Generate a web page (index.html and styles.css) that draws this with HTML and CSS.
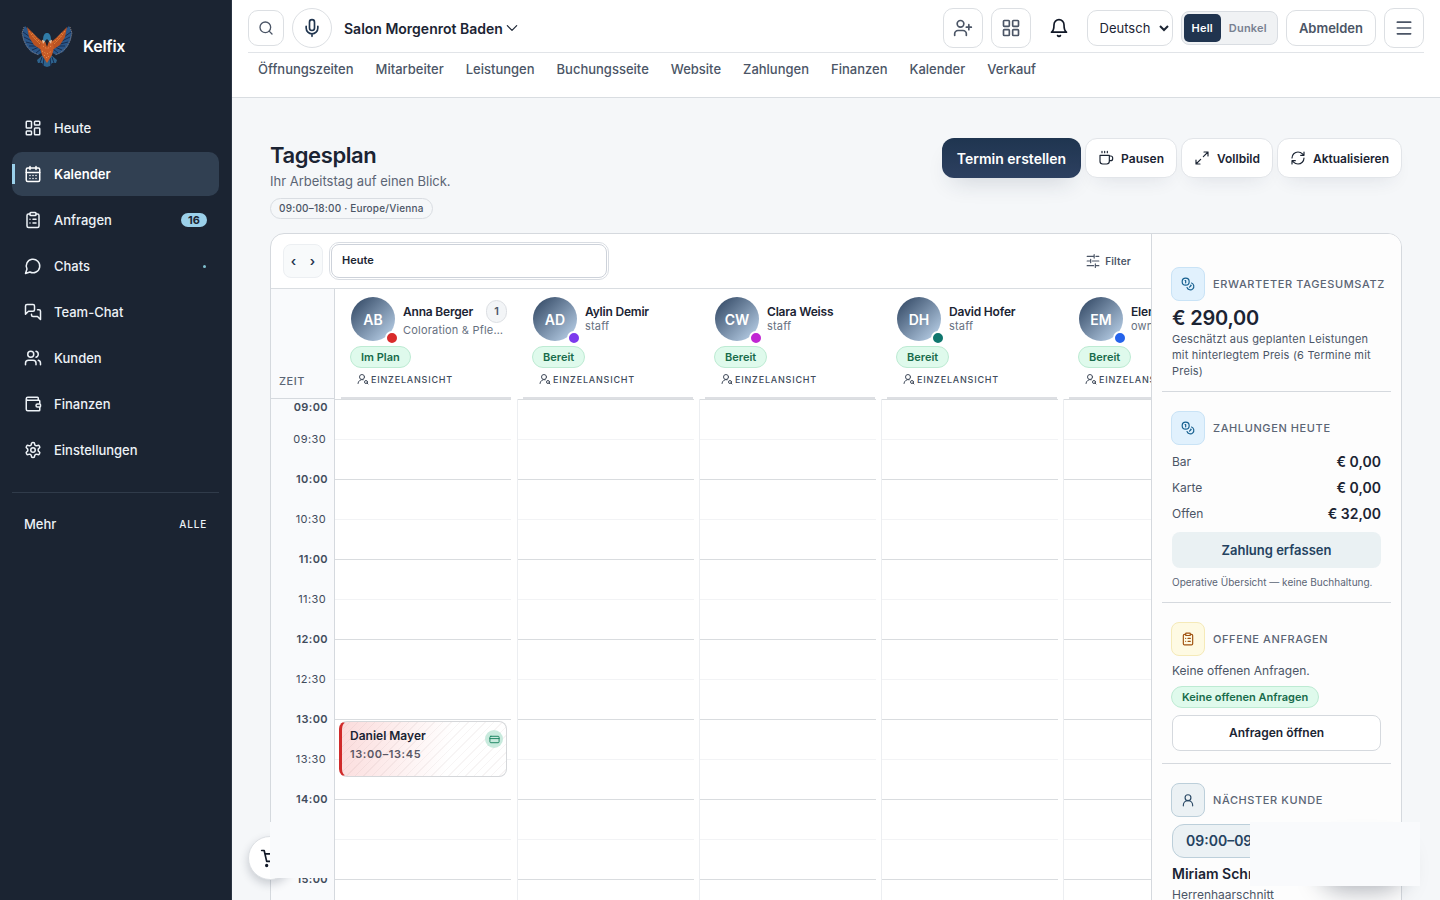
FILE: index.html
```html
<!DOCTYPE html>
<html lang="de">
<head>
  <meta charset="UTF-8" />
  <meta name="viewport" content="width=device-width, initial-scale=1.0"/>
  <title>Kelfix – Tagesplan</title>
  <link rel="stylesheet" href="styles.css">
</head>

<body>
  <!-- Shared icons -->
  <svg class="sprite" aria-hidden="true">
    <symbol id="i-clipboard" viewBox="0 0 24 24"><rect x="8" y="2" width="8" height="4" rx="1"/><path d="M16 4h2a2 2 0 0 1 2 2v14a2 2 0 0 1-2 2H6a2 2 0 0 1-2-2V6a2 2 0 0 1 2-2h2M12 11h4M12 16h4M8 11h.01M8 16h.01"/></symbol>
    <symbol id="i-coins" viewBox="0 0 24 24"><circle cx="8" cy="8" r="6"/><path d="M18.09 10.37A6 6 0 1 1 10.34 18M7 6h1v4M16.71 13.88l.7.71-2.82 2.82"/></symbol>
    <symbol id="i-user-search" viewBox="0 0 24 24"><circle cx="10" cy="8" r="5"/><path d="M2 21a8 8 0 0 1 10.43-7.62"/><circle cx="18" cy="18" r="3"/><path d="m22 22-1.900-1.900"/></symbol>
  </svg>

  <div class="app">
    <aside class="sidebar">
      <a href="#" class="brand">
        <svg class="brand-logo" viewBox="0 0 52 44" aria-hidden="true">
          <path fill="#2b5688" d="M4 2 8 6 13 10 18 16 22 22 22 28 17 31 10 28 5 22 2 15 1 8Z"/>
          <path fill="#2b5688" d="M48 2 44 6 39 10 34 16 30 22 30 28 35 31 42 28 47 22 50 15 51 8Z"/>
          <path fill="none" stroke="#8a7c78" stroke-width="1" stroke-dasharray="1 1" d="M3 3 1 9 3 17 7 24 13 29 18 31M49 3 51 9 49 17 45 24 39 29 34 31"/>
          <path fill="none" stroke="#172d50" stroke-width="1" d="m2 8 7 5M3 13l8 4M5 18l8 2M8 22l7 0M11 26l7-3M15 29l5-4M50 8l-7 5M49 13l-8 4M47 18l-8 2M44 22l-7 0M41 26l-7-3M37 29l-5-4"/>
          <path fill="#b85223" d="m6 3 5 5 6 6 5 4 1 6-4 1-6-4-5-8ZM46 3l-5 5-6 6-5 4-1 6 4 1 6-4 5-8Z"/>
          <path fill="none" stroke="#e98438" stroke-width="1" stroke-dasharray="2 1" d="m8 7 5 7 6 6M11 9l6 7 4 3M44 7l-5 7-6 6M41 9l-6 7-4 3"/>
          <path fill="#2e638d" d="m16 36 6-5 4-1 4 1 6 5-1 3-4 0-2 3-3 1-3-1-2-3-4 0Z"/>
          <path fill="none" stroke="#172d50" stroke-width="1" d="m21 33-2 6M23 34l-1 8M31 33l2 6M29 34l1 8"/>
          <path fill="#c75b27" d="m21 16 5-2 5 2 2 8-2 7-5 8-5-8-2-7Z"/>
          <path fill="none" stroke="#f0a15a" stroke-width="1" stroke-dasharray="1 2" d="m22 22 4 3 4-3M21 27l5 3 5-3M23 31l3 3 3-3"/>
          <path fill="#307ca8" d="M22 17c0-7 2-8 4-8s4 1 4 8l-4 2Z"/>
          <path fill="#e4c0a0" d="m21 16 3 1-2 3ZM31 16l-3 1 2 3Z"/>
          <path fill="#1a1f2b" d="m24 17 2-2 2 2-2 6Z"/>
        </svg>
        <span>Kelfix</span>
      </a>

      <nav class="side-nav" aria-label="Hauptmenü">
        <a href="#"><svg class="icon" viewBox="0 0 24 24"><rect x="3" y="3" width="7" height="9" rx="1"/><rect x="14" y="3" width="7" height="5" rx="1"/><rect x="14" y="12" width="7" height="9" rx="1"/><rect x="3" y="16" width="7" height="5" rx="1"/></svg>Heute</a>
        <a href="#" class="active"><svg class="icon" viewBox="0 0 24 24"><rect x="3" y="4" width="18" height="18" rx="2"/><path d="M8 2v4M16 2v4M3 10h18M8 14h.01M12 14h.01M16 14h.01M8 18h.01M12 18h.01M16 18h.01"/></svg>Kalender</a>
        <a href="#"><svg class="icon"><use href="#i-clipboard"/></svg>Anfragen<span class="count">16</span></a>
        <a href="#"><svg class="icon" viewBox="0 0 24 24"><path d="M7.900 20A9 9 0 1 0 4 16.100L2 22Z"/></svg>Chats<span class="dot"></span></a>
        <a href="#"><svg class="icon" viewBox="0 0 24 24"><path d="M14 9a2 2 0 0 1-2 2H6l-4 4V4a2 2 0 0 1 2-2h8a2 2 0 0 1 2 2ZM18 9h2a2 2 0 0 1 2 2v11l-4-4h-6a2 2 0 0 1-2-2v-1"/></svg>Team-Chat</a>
        <a href="#"><svg class="icon" viewBox="0 0 24 24"><path d="M16 21v-2a4 4 0 0 0-4-4H6a4 4 0 0 0-4 4v2"/><circle cx="9" cy="7" r="4"/><path d="M22 21v-2a4 4 0 0 0-3-3.870M16 3.130a4 4 0 0 1 0 7.750"/></svg>Kunden</a>
        <a href="#"><svg class="icon" viewBox="0 0 24 24"><path d="M19 7V4a1 1 0 0 0-1-1H5a2 2 0 0 0 0 4h15a1 1 0 0 1 1 1v4h-3a2 2 0 0 0 0 4h3a1 1 0 0 0 1-1v-2a1 1 0 0 0-1-1M3 5v14a2 2 0 0 0 2 2h15a1 1 0 0 0 1-1v-4"/></svg>Finanzen</a>
        <a href="#"><svg class="icon" viewBox="0 0 24 24"><path d="M12.220 2h-.44a2 2 0 0 0-2 2v.18a2 2 0 0 1-1 1.730l-.43.25a2 2 0 0 1-2 0l-.15-.08a2 2 0 0 0-2.730.73l-.22.38a2 2 0 0 0 .73 2.730l.15.1a2 2 0 0 1 1 1.720v.51a2 2 0 0 1-1 1.740l-.15.09a2 2 0 0 0-.73 2.730l.22.38a2 2 0 0 0 2.730.73l.15-.08a2 2 0 0 1 2 0l.43.25a2 2 0 0 1 1 1.730V20a2 2 0 0 0 2 2h.44a2 2 0 0 0 2-2v-.18a2 2 0 0 1 1-1.730l.43-.25a2 2 0 0 1 2 0l.15.08a2 2 0 0 0 2.730-.73l.22-.39a2 2 0 0 0-.73-2.730l-.15-.08a2 2 0 0 1-1-1.740v-.5a2 2 0 0 1 1-1.740l.15-.09a2 2 0 0 0 .73-2.730l-.22-.38a2 2 0 0 0-2.730-.73l-.15.08a2 2 0 0 1-2 0l-.43-.25a2 2 0 0 1-1-1.730V4a2 2 0 0 0-2-2z"/><circle cx="12" cy="12" r="3"/></svg>Einstellungen</a>
      </nav>

      <div class="side-more">
        <span>Mehr</span>
        <button type="button">ALLE</button>
      </div>
    </aside>

    <div class="content">
      <header class="topbar">
        <div class="topbar-row">
          <button type="button" class="icon-btn small" aria-label="Suche"><svg class="icon" viewBox="0 0 24 24"><circle cx="11" cy="11" r="8"/><path d="m21 21-4.300-4.300"/></svg></button>
          <button type="button" class="icon-btn round" aria-label="Spracheingabe"><svg class="icon" viewBox="0 0 24 24"><rect x="9" y="2" width="6" height="13" rx="3"/><path d="M19 10v2a7 7 0 0 1-14 0v-2M12 19v3"/></svg></button>
          <button type="button" class="salon">Salon Morgenrot Baden<svg class="icon" viewBox="0 0 24 24"><path d="m4 8 8 8 8-8"/></svg></button>

          <div class="topbar-right">
            <button type="button" class="icon-btn" aria-label="Kunde anlegen"><svg class="icon" viewBox="0 0 24 24"><path d="M16 21v-2a4 4 0 0 0-4-4H6a4 4 0 0 0-4 4v2"/><circle cx="9" cy="7" r="4"/><path d="M19 8v6M22 11h-6"/></svg></button>
            <button type="button" class="icon-btn" aria-label="Apps"><svg class="icon" viewBox="0 0 24 24"><rect x="3" y="3" width="7" height="7" rx="1"/><rect x="14" y="3" width="7" height="7" rx="1"/><rect x="14" y="14" width="7" height="7" rx="1"/><rect x="3" y="14" width="7" height="7" rx="1"/></svg></button>
            <button type="button" class="icon-btn bell" aria-label="Mitteilungen"><svg class="icon" viewBox="0 0 24 24"><path d="M6 8a6 6 0 0 1 12 0c0 7 3 9 3 9H3s3-2 3-9M10.300 21a1.940 1.940 0 0 0 3.400 0"/></svg></button>
            <select class="lang" aria-label="Sprache"><option>Deutsch</option></select>
            <div class="theme">
              <button type="button" class="on">Hell</button>
              <button type="button">Dunkel</button>
            </div>
            <button type="button" class="logout">Abmelden</button>
            <button type="button" class="icon-btn menu" aria-label="Menü"><svg class="icon" viewBox="0 0 24 24"><path d="M4 5h16M4 12h16M4 19h16"/></svg></button>
          </div>
        </div>
        <nav class="top-nav" aria-label="Bereiche">
          <a href="#">Öffnungszeiten</a>
          <a href="#">Mitarbeiter</a>
          <a href="#">Leistungen</a>
          <a href="#">Buchungsseite</a>
          <a href="#">Website</a>
          <a href="#">Zahlungen</a>
          <a href="#">Finanzen</a>
          <a href="#">Kalender</a>
          <a href="#">Verkauf</a>
        </nav>
      </header>

      <main class="page">
        <div class="page-head">
          <div>
            <h1>Tagesplan</h1>
            <p>Ihr Arbeitstag auf einen Blick.</p>
            <span class="hours">09:00–18:00 · Europe/Vienna</span>
          </div>
          <div class="actions">
            <button type="button" class="btn primary">Termin erstellen</button>
            <button type="button" class="btn"><svg class="icon" viewBox="0 0 24 24"><path d="M3 8h14v9a4 4 0 0 1-4 4H7a4 4 0 0 1-4-4ZM17 9h2a3 3 0 0 1 3 3v1a3 3 0 0 1-3 3h-2M6 2v2M10 2v2M14 2v2"/></svg>Pausen</button>
            <button type="button" class="btn"><svg class="icon" viewBox="0 0 24 24"><path d="M15 3h6v6M9 21H3v-6M21 3l-7 7M3 21l7-7"/></svg>Vollbild</button>
            <button type="button" class="btn"><svg class="icon" viewBox="0 0 24 24"><path d="M3 12a9 9 0 0 1 9-9 9.750 9.750 0 0 1 6.740 2.740L21 8M21 3v5h-5M21 12a9 9 0 0 1-9 9 9.750 9.750 0 0 1-6.740-2.740L3 16M8 16H3v5"/></svg>Aktualisieren</button>
          </div>
        </div>

        <div class="planner">
          <section class="calendar">
            <div class="toolbar">
              <div class="stepper">
                <button type="button" aria-label="Vorheriger Tag">‹</button>
                <button type="button" aria-label="Nächster Tag">›</button>
              </div>
              <input type="text" class="day" value="Heute" aria-label="Tag">
              <button type="button" class="filter"><svg class="icon" viewBox="0 0 24 24"><path d="M2 4h11M17 4h5M14 1v6M2 12h5M11 12h11M8 9v6M2 20h11M17 20h5M16 17v6"/></svg>Filter</button>
            </div>

            <div class="grid-wrap">
              <div class="times">
                <div class="times-head">ZEIT</div>
                <div class="slot first">09:00</div>
                <div class="slot half">09:30</div>
                <div class="slot">10:00</div>
                <div class="slot half">10:30</div>
                <div class="slot">11:00</div>
                <div class="slot half">11:30</div>
                <div class="slot">12:00</div>
                <div class="slot half">12:30</div>
                <div class="slot">13:00</div>
                <div class="slot half">13:30</div>
                <div class="slot">14:00</div>
                <div class="slot half">14:30</div>
                <div class="slot">15:00</div>
              </div>

              <div class="staff">
                <article class="col">
                  <div class="col-head">
                    <div class="person">
                      <div class="avatar">AB<i class="red"></i></div>
                      <div class="who"><div class="who-top"><b>Anna Berger</b><span class="num">1</span></div><span class="role">Coloration &amp; Pflegekur</span></div>
                    </div>
                    <span class="badge">Im Plan</span>
                    <button type="button" class="single"><svg class="icon"><use href="#i-user-search"/></svg>EINZELANSICHT</button>
                  </div>
                  <div class="lanes">
                    <div class="event" style="top: 322px; height: 56px">
                      <div><b>Daniel Mayer</b><span>13:00–13:45</span></div>
                      <span class="paid"><svg class="icon" viewBox="0 0 24 24"><rect x="2" y="5" width="20" height="14" rx="2"/><path d="M2 10h20"/></svg></span>
                    </div>
                  </div>
                </article>
                <article class="col">
                  <div class="col-head">
                    <div class="person">
                      <div class="avatar">AD<i class="violet"></i></div>
                      <div class="who"><b>Aylin Demir</b><span class="role">staff</span></div>
                    </div>
                    <span class="badge">Bereit</span>
                    <button type="button" class="single"><svg class="icon"><use href="#i-user-search"/></svg>EINZELANSICHT</button>
                  </div>
                  <div class="lanes"></div>
                </article>
                <article class="col">
                  <div class="col-head">
                    <div class="person">
                      <div class="avatar">CW<i class="pink"></i></div>
                      <div class="who"><b>Clara Weiss</b><span class="role">staff</span></div>
                    </div>
                    <span class="badge">Bereit</span>
                    <button type="button" class="single"><svg class="icon"><use href="#i-user-search"/></svg>EINZELANSICHT</button>
                  </div>
                  <div class="lanes"></div>
                </article>
                <article class="col">
                  <div class="col-head">
                    <div class="person">
                      <div class="avatar">DH<i class="teal"></i></div>
                      <div class="who"><b>David Hofer</b><span class="role">staff</span></div>
                    </div>
                    <span class="badge">Bereit</span>
                    <button type="button" class="single"><svg class="icon"><use href="#i-user-search"/></svg>EINZELANSICHT</button>
                  </div>
                  <div class="lanes"></div>
                </article>
                <article class="col">
                  <div class="col-head">
                    <div class="person">
                      <div class="avatar">EM<i class="blue"></i></div>
                      <div class="who"><b>Elena M.</b><span class="role">owner</span></div>
                    </div>
                    <span class="badge">Bereit</span>
                    <button type="button" class="single"><svg class="icon"><use href="#i-user-search"/></svg>EINZELANSICHT</button>
                  </div>
                  <div class="lanes"></div>
                </article>
              </div>
            </div>
          </section>

          <aside class="summary">
            <section class="card">
              <h2><span class="tile sky"><svg class="icon"><use href="#i-coins"/></svg></span>ERWARTETER TAGESUMSATZ</h2>
              <strong class="amount">€ 290,00</strong>
              <p class="desc">Geschätzt aus geplanten Leistungen mit hinterlegtem Preis (6 Termine mit Preis)</p>
            </section>

            <section class="card">
              <h2><span class="tile sky"><svg class="icon"><use href="#i-coins"/></svg></span>ZAHLUNGEN HEUTE</h2>
              <dl>
                <div><dt>Bar</dt><dd>€ 0,00</dd></div>
                <div><dt>Karte</dt><dd>€ 0,00</dd></div>
                <div><dt>Offen</dt><dd>€ 32,00</dd></div>
              </dl>
              <button type="button" class="wide soft">Zahlung erfassen</button>
              <p class="note">Operative Übersicht — keine Buchhaltung.</p>
            </section>

            <section class="card">
              <h2><span class="tile amber"><svg class="icon"><use href="#i-clipboard"/></svg></span>OFFENE ANFRAGEN</h2>
              <p class="text">Keine offenen Anfragen.</p>
              <span class="badge">Keine offenen Anfragen</span>
              <button type="button" class="wide">Anfragen öffnen</button>
            </section>

            <section class="card">
              <h2><span class="tile slate"><svg class="icon" viewBox="0 0 24 24"><circle cx="12" cy="8" r="5"/><path d="M4 22v-1a8 8 0 0 1 16 0v1"/></svg></span>NÄCHSTER KUNDE</h2>
              <span class="when">09:00–09:30</span>
              <b class="client">Miriam Schneider</b>
              <p class="text">Herrenhaarschnitt</p>
            </section>
          </aside>
        </div>
      </main>
    </div>
  </div>

  <!-- Floating elements -->
  <button type="button" class="cart" aria-label="Warenkorb"><svg class="icon" viewBox="0 0 24 24"><circle cx="8" cy="21" r="1"/><circle cx="19" cy="21" r="1"/><path d="M2 3h3l3 13h11l2-9H6"/></svg></button>
  <div class="cover cover-left"></div>
  <div class="help-shadow"></div>
  <div class="cover cover-right"></div>
</body>
</html>
```
FILE: styles.css
```css
* {
  box-sizing: border-box;
}

body {
  margin: 0;
  font-family: Inter, 'Liberation Sans', sans-serif;
  font-size: 13px;
  color: #1b2433;
  background: #f5f7f9;
}

button, input, select {
  font: inherit;
  color: inherit;
}

button {
  cursor: pointer;
  padding: 0;
  border: none;
  background: none;
}

a {
  color: inherit;
  text-decoration: none;
}

h1, h2, p, dl, dd {
  margin: 0;
}

.sprite {
  display: none;
}

.icon {
  width: 18px;
  height: 18px;
  flex: none;
  fill: none;
  stroke: currentColor;
  stroke-width: 2;
  stroke-linecap: round;
  stroke-linejoin: round;
}

.app {
  display: grid;
  grid-template-columns: 232px minmax(0, 1fr);
  height: 100vh;
  overflow: hidden;
}

/* Sidebar */
.sidebar {
  padding: 20px 12px;
  background: #1b2432;
  color: #edf2f7;
  border-right: 1px solid #2b3544;
}

.brand {
  display: flex;
  align-items: center;
  gap: 10px;
  height: 52px;
  padding-left: 9px;
  font-size: 16px;
  font-weight: 600;
  letter-spacing: -0.3px;
  color: #fff;
}

.brand-logo {
  width: 52px;
  height: 44px;
}

.side-nav {
  display: flex;
  flex-direction: column;
  gap: 2px;
  margin-top: 34px;
  padding-bottom: 20px;
  border-bottom: 1px solid #303b4a;
}

.side-nav a {
  display: flex;
  align-items: center;
  gap: 12px;
  height: 44px;
  padding: 0 12px 1px;
  border-radius: 10px;
  font-weight: 500;
}

.side-nav .active {
  font-weight: 600;
  color: #fff;
  background: linear-gradient(#9bd0ea, #9bd0ea) left center / 3px 20px no-repeat #314052;
}

.count {
  margin-left: auto;
  padding: 0 7px;
  border-radius: 7px;
  font-size: 11px;
  line-height: 14px;
  font-weight: 700;
  color: #1b2432;
  background: #9bd0ea;
}

.dot {
  width: 3px;
  height: 3px;
  margin: 2px 1px 0 auto;
  border-radius: 50%;
  background: #7fc0cf;
}

.side-more {
  display: flex;
  align-items: center;
  justify-content: space-between;
  padding: 23px 12px;
  font-weight: 500;
}

.side-more button {
  font-size: 10px;
  font-weight: 500;
  letter-spacing: 0.8px;
}

/* Top bar */
.content {
  display: flex;
  flex-direction: column;
  min-width: 0;
  overflow: hidden;
}

.topbar {
  flex: none;
  height: 98px;
  padding: 8px 16px 0;
  background: #fff;
  border-bottom: 1px solid #d9dde1;
}

.topbar-row {
  display: flex;
  align-items: center;
  gap: 8px;
  height: 45px;
  padding-bottom: 4px;
  border-bottom: 1px solid #e1e4e8;
}

.icon-btn {
  display: grid;
  place-items: center;
  width: 40px;
  height: 40px;
  border: 1px solid #dcdfe3;
  border-radius: 10px;
  color: #4b5566;
}

.icon-btn .icon {
  width: 20px;
  height: 20px;
}

.icon-btn.small {
  width: 36px;
  height: 36px;
}

.icon-btn.small .icon {
  width: 16px;
  height: 16px;
}

.icon-btn.round {
  border-radius: 50%;
  color: #20354f;
}

.icon-btn.bell {
  border: none;
  color: #111827;
}

.salon {
  display: flex;
  align-items: center;
  gap: 2px;
  margin-left: 4px;
  font-size: 14px;
  font-weight: 600;
}

.salon .icon {
  width: 14px;
  height: 14px;
}

.topbar-right {
  display: flex;
  align-items: center;
  gap: 8px;
  margin-left: auto;
}

.lang, .logout {
  height: 36px;
  border: 1px solid #dcdfe3;
  border-radius: 10px;
  background: #fff;
}

.lang {
  width: 86px;
  padding-left: 8px;
}

.logout {
  padding: 0 12px;
  font-weight: 600;
  color: #4b5566;
}

.theme {
  display: flex;
  height: 34px;
  padding: 2px;
  border: 1px solid #d9dde2;
  border-radius: 8px;
  background: #f0f2f4;
}

.theme button {
  padding: 0 8px;
  border-radius: 5px;
  font-size: 11px;
  font-weight: 600;
  letter-spacing: 0.2px;
  color: #788191;
}

.theme .on {
  color: #fff;
  background: #20344f;
}

.top-nav {
  display: flex;
  gap: 22px;
  padding: 6px 10px 0;
  line-height: 20px;
  font-weight: 500;
  color: #4b5566;
}

/* Page */
.page {
  flex: 1;
  padding: 40px 38px;
  overflow: hidden;
}

.page-head {
  display: flex;
  justify-content: space-between;
  align-items: flex-start;
}

h1 {
  margin-top: 2px;
  font-size: 22px;
  line-height: 30px;
  font-weight: 600;
  letter-spacing: -0.4px;
}

.page-head p {
  margin: 2px 0 7px;
  line-height: 19px;
  color: #5b6575;
}

.hours {
  display: block;
  width: fit-content;
  padding: 0 8px;
  border: 1px solid #d9dde2;
  border-radius: 11px;
  font-size: 10px;
  line-height: 19px;
  font-weight: 500;
  letter-spacing: 0.2px;
  color: #4b5566;
}

.actions {
  display: flex;
  gap: 4px;
}

.btn {
  display: flex;
  align-items: center;
  gap: 7px;
  height: 40px;
  padding: 0 12px;
  border: 1px solid #e2e5e9;
  border-radius: 12px;
  font-size: 12px;
  font-weight: 600;
  background: #fff;
  box-shadow: 0 10px 20px -10px rgba(30, 45, 70, 0.12);
}

.btn .icon {
  width: 16px;
  height: 16px;
  stroke-width: 1.75;
}

.btn.primary {
  padding: 0 15px;
  border: none;
  font-size: 14px;
  color: #fff;
  background: linear-gradient(#1f3550, #2d4060);
  box-shadow: 0 12px 24px -10px rgba(30, 45, 70, 0.2);
}

/* Planner */
.planner {
  display: grid;
  grid-template-columns: minmax(0, 1fr) 250px;
  margin-top: 14px;
  border: 1px solid #d5d9de;
  border-radius: 14px;
  background: #fff;
  overflow: hidden;
}

.toolbar {
  display: flex;
  align-items: center;
  gap: 8px;
  height: 55px;
  padding: 0 12px;
  border-bottom: 1px solid #d9dde1;
}

.stepper {
  display: grid;
  grid-template-columns: 1fr 1fr;
  width: 40px;
  height: 34px;
  border: 1px solid #eceff2;
  border-radius: 8px;
  font-size: 13px;
  font-weight: 600;
  color: #24344f;
  background: #f8fafb;
}

.day {
  width: 276px;
  height: 34px;
  padding: 0 10px 2px;
  border: 1px solid #cdd2da;
  border-radius: 8px;
  font-size: 11px;
  font-weight: 600;
  background: #fff;
  outline: 1px solid #d9dde3;
  outline-offset: 1px;
}

.filter {
  display: flex;
  align-items: center;
  gap: 5px;
  margin-left: auto;
  padding-right: 8px;
  font-size: 10px;
  font-weight: 600;
  letter-spacing: 0.2px;
  color: #4b5566;
}

.filter .icon {
  width: 14px;
  height: 14px;
}

.grid-wrap {
  display: grid;
  grid-template-columns: 64px minmax(0, 1fr);
}

.times {
  background: #f9fafc;
  border-right: 1px solid #d5d9de;
}

.times-head {
  display: flex;
  align-items: flex-end;
  height: 110px;
  padding: 0 8px 10px;
  border-bottom: 1px solid #d5d9de;
  font-size: 11px;
  font-weight: 500;
  letter-spacing: 0.5px;
  color: #5b6575;
}

.slot {
  height: 40px;
  padding-right: 6px;
  font-size: 11px;
  line-height: 40px;
  font-weight: 600;
  letter-spacing: 0.4px;
  text-align: right;
  color: #414b5b;
}

.slot.half {
  padding-right: 8px;
  font-weight: 400;
}

.slot.first {
  height: 20px;
  line-height: 16px;
}

.staff {
  display: flex;
  overflow: hidden;
}

.col {
  flex: none;
  width: 182px;
}

.col-head {
  display: flex;
  flex-direction: column;
  align-items: flex-start;
  height: 110px;
  padding: 8px 10px 0 16px;
  background: linear-gradient(#dddfe3, #dddfe3) 6px 100% / 170px 2px no-repeat;
}

.person {
  display: flex;
  align-items: center;
  gap: 8px;
  width: 100%;
}

.avatar {
  position: relative;
  display: grid;
  place-items: center;
  flex: none;
  width: 44px;
  height: 44px;
  border-radius: 50%;
  font-size: 14px;
  font-weight: 600;
  color: #fff;
  background: linear-gradient(135deg, #3a506c 10%, #b3cae2 90%);
}

.avatar i {
  position: absolute;
  right: -4px;
  bottom: -4px;
  width: 14px;
  height: 14px;
  border: 2px solid #fff;
  border-radius: 50%;
}

.red { background: #d92b2b; }
.violet { background: #7c3aed; }
.pink { background: #c026d3; }
.teal { background: #0f766e; }
.blue { background: #2563eb; }

.who {
  flex: 1;
  display: flex;
  flex-direction: column;
  min-width: 0;
  font-size: 12px;
  line-height: 15px;
}

.who b {
  font-weight: 600;
  letter-spacing: -0.2px;
}

.who-top {
  display: flex;
  align-items: center;
  justify-content: space-between;
}

.num {
  width: 21px;
  border: 1px solid #dcdfe3;
  border-radius: 11px;
  font-size: 11px;
  line-height: 21px;
  font-weight: 600;
  text-align: center;
  color: #4b5566;
  background: #f3f5f7;
}

.role {
  font-size: 11px;
  letter-spacing: 0.2px;
  color: #667080;
  white-space: nowrap;
  overflow: hidden;
  text-overflow: ellipsis;
}

.badge {
  display: block;
  width: fit-content;
  margin: 5px 0 0 -1px;
  padding: 0 10px;
  border: 1px solid #bdebd3;
  border-radius: 11px;
  font-size: 11px;
  line-height: 20px;
  font-weight: 600;
  color: #176b4b;
  background: #dffaec;
}

.single {
  display: flex;
  align-items: center;
  gap: 2px;
  height: 16px;
  margin: 3px 0 0 6px;
  font-size: 9px;
  font-weight: 500;
  letter-spacing: 0.8px;
  color: #414b5b;
}

.single .icon {
  width: 12px;
  height: 12px;
}

/* Hour and half-hour lines, one hour is 80px */
.lanes {
  position: relative;
  height: 720px;
  background:
    linear-gradient(#d9dcdf 1px, transparent 1px) 0 0 / 176px 80px repeat-y,
    linear-gradient(#f2f3f5 1px, transparent 1px) 0 40px / 176px 80px repeat-y;
}

.col + .col .lanes {
  border-left: 1px solid #eceef1;
}

.event {
  position: absolute;
  left: 4px;
  right: 10px;
  display: flex;
  justify-content: space-between;
  padding: 5px 3px 0 8px;
  border: 1px solid #d5d7da;
  border-left: 3px solid #d02b2b;
  border-radius: 8px;
  background:
    repeating-linear-gradient(135deg, transparent 0 5px, rgba(120, 80, 80, 0.06) 5px 6px),
    linear-gradient(100deg, #fbdcdc, #fff 65%);
}

.event b, .event div span {
  display: block;
  font-size: 12px;
  line-height: 18px;
  font-weight: 600;
}

.event div span {
  font-size: 11px;
  letter-spacing: 0.6px;
  color: #5b5865;
}

.paid {
  display: grid;
  place-items: center;
  width: 18px;
  height: 18px;
  margin-top: 3px;
  border-radius: 50%;
  color: #13805c;
  background: #c8eadd;
}

.paid .icon {
  width: 11px;
  height: 11px;
}

/* Summary column */
.summary {
  padding: 14px 10px;
  border-left: 1px solid #d5d9de;
  background: #fdfdfd;
}

.card {
  padding: 19px 10px 12px;
  border-bottom: 1px solid #d5d9de;
}

.card h2 {
  display: flex;
  align-items: center;
  gap: 8px;
  margin: 0 -6px 4px -1px;
  font-size: 11px;
  font-weight: 500;
  letter-spacing: 0.6px;
  white-space: nowrap;
  color: #5b6575;
}

.tile {
  display: grid;
  place-items: center;
  flex: none;
  width: 34px;
  height: 34px;
  border: 1px solid #c9e3f6;
  border-radius: 8px;
}

.tile .icon {
  width: 14px;
  height: 14px;
}

.sky {
  color: #155f8f;
  background: #e1f1fd;
}

.amber {
  color: #a0520f;
  border-color: #f5eab8;
  background: #fefae3;
}

.slate {
  color: #2b4a66;
  border-color: #bccfda;
  background: #ebf1f4;
}

.amount {
  display: block;
  font-size: 20px;
  line-height: 26px;
  font-weight: 600;
  letter-spacing: -0.2px;
}

.desc {
  font-size: 11px;
  line-height: 16px;
  letter-spacing: 0.2px;
  color: #4b5566;
}

.card dl div {
  display: flex;
  justify-content: space-between;
  line-height: 26px;
}

.card dt {
  font-size: 12px;
  color: #4b5566;
}

.card dd {
  font-size: 14px;
  font-weight: 600;
}

.card .badge {
  margin-top: 4px;
}

.wide {
  width: 100%;
  height: 36px;
  margin-top: 7px;
  padding-bottom: 1px;
  border: 1px solid #d5d9de;
  border-radius: 8px;
  font-size: 12px;
  font-weight: 600;
  background: #fff;
}

.wide.soft {
  margin-top: 5px;
  border: none;
  font-size: 13px;
  color: #24425f;
  background: #eaf1f3;
}

.note {
  margin-top: 6px;
  font-size: 10px;
  line-height: 16px;
  color: #5b6575;
}

.text {
  font-size: 12px;
  line-height: 22px;
  color: #4b5566;
}

.when {
  display: block;
  width: fit-content;
  margin-top: 7px;
  padding: 0 13px;
  border: 1px solid #bccfda;
  border-radius: 12px;
  font-size: 14px;
  line-height: 32px;
  font-weight: 600;
  color: #24425f;
  background: #ebf1f4;
}

.client {
  display: block;
  margin-top: 6px;
  font-size: 14px;
  line-height: 20px;
  font-weight: 600;
}

/* Floating elements */
.cart {
  position: fixed;
  left: 248px;
  bottom: 20px;
  display: grid;
  place-items: center;
  width: 44px;
  height: 44px;
  border: 1px solid #dcdfe3;
  border-radius: 50%;
  color: #111827;
  background: #fff;
  box-shadow: 0 4px 10px rgba(20, 30, 50, 0.2);
}

.cart .icon {
  width: 20px;
  height: 20px;
}

.cover {
  position: fixed;
  background: #f9fafc;
}

.cover-left {
  left: 270px;
  bottom: 22px;
  width: 64px;
  height: 56px;
}

.cover-right {
  right: 20px;
  bottom: 14px;
  width: 170px;
  height: 64px;
}

.help-shadow {
  position: fixed;
  right: 36px;
  bottom: 20px;
  width: 84px;
  height: 44px;
  border-radius: 22px;
  box-shadow: 0 10px 24px rgba(20, 30, 50, 0.35);
}
```
